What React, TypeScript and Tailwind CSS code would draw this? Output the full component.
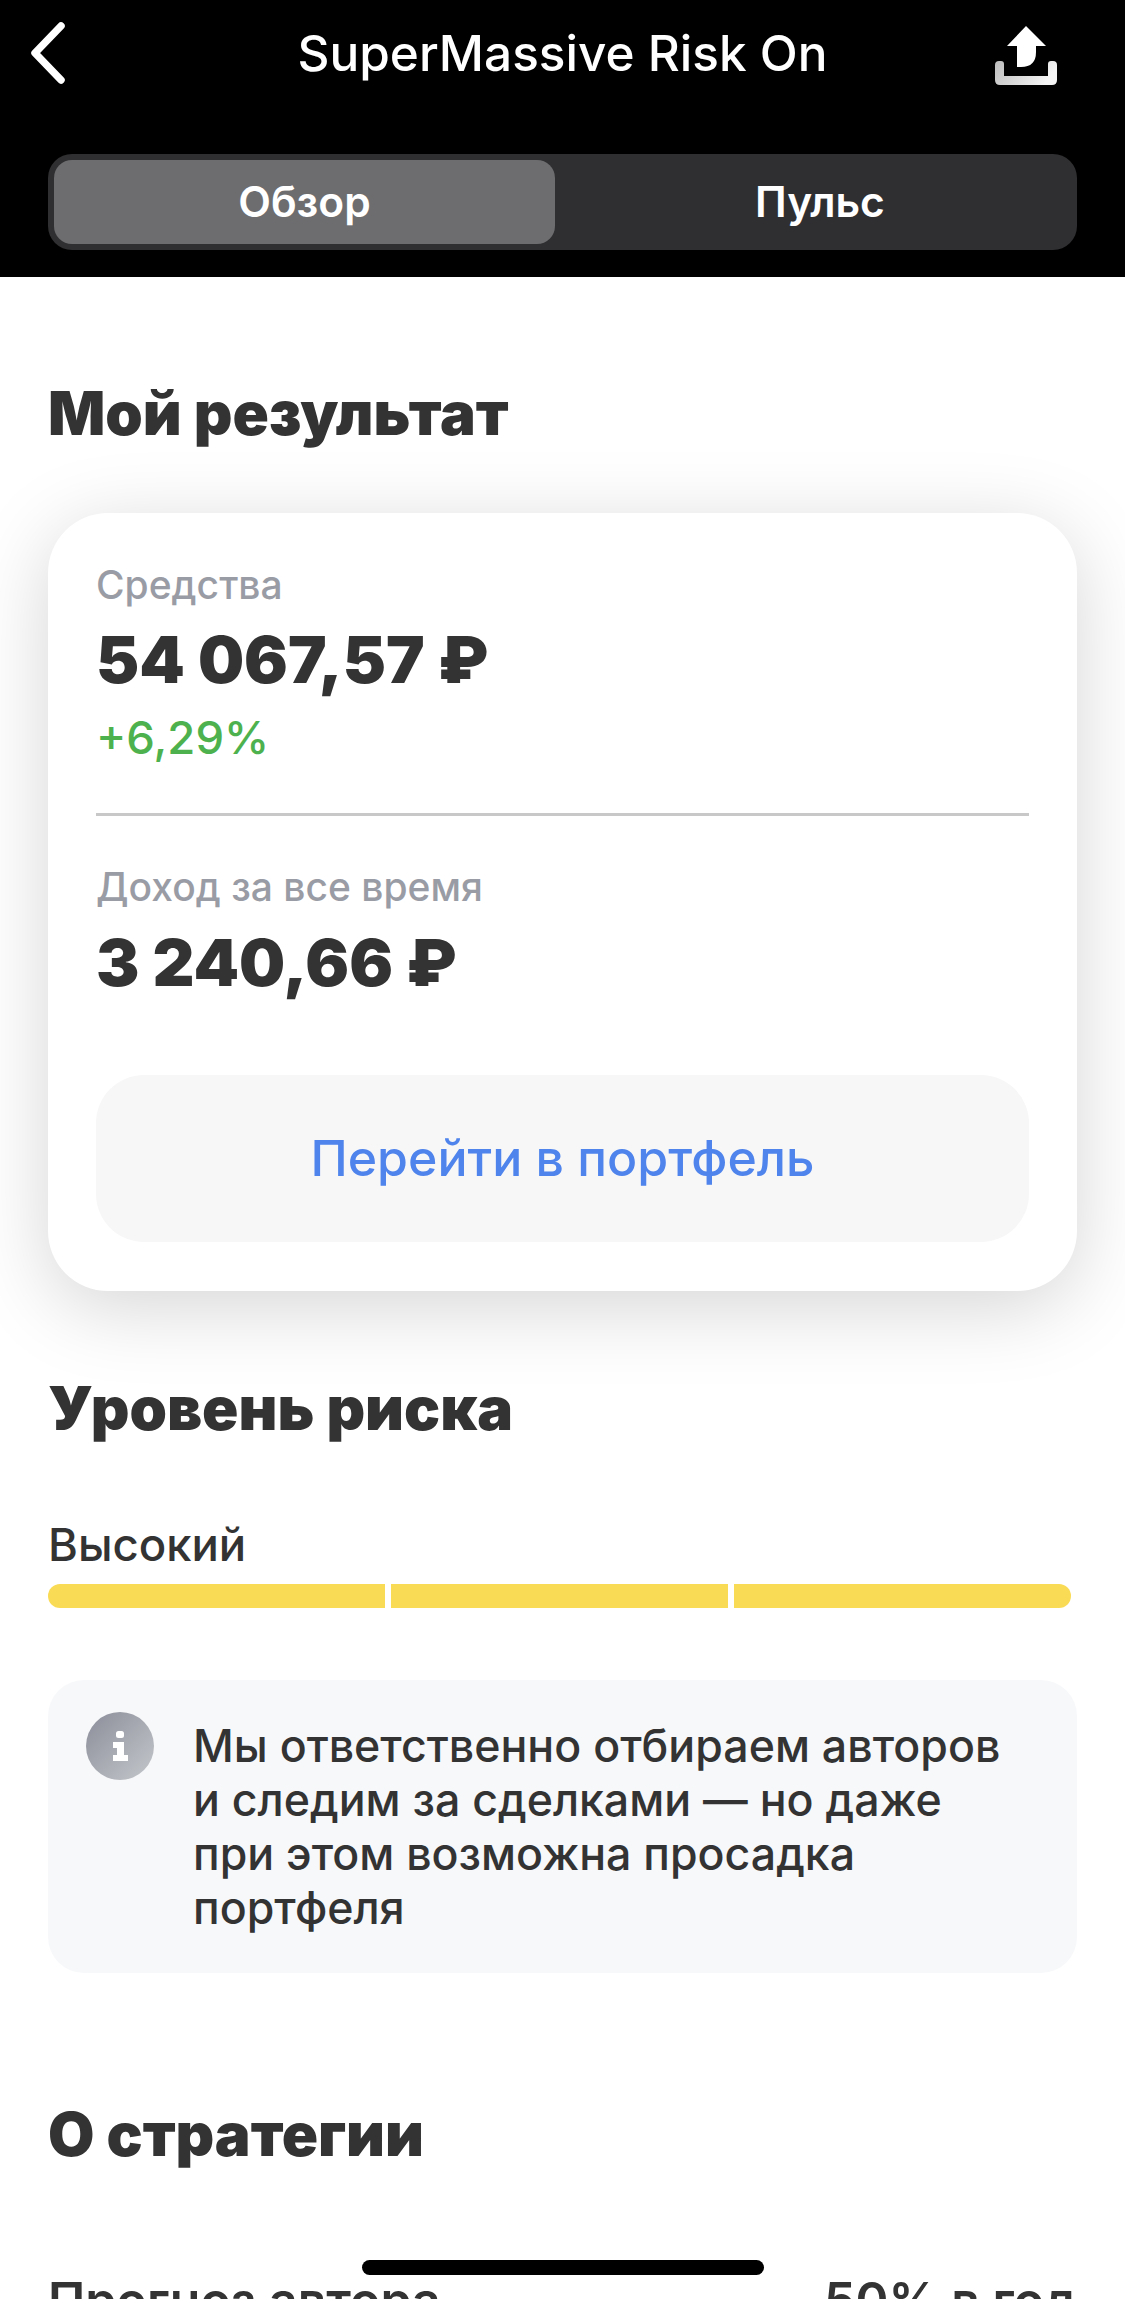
const font = { fontFamily: 'Inter, "Noto Sans", sans-serif' };

function BackIcon() {
  return (
    <svg width="40" height="64" viewBox="0 0 40 64" fill="none" className="ml-[28px]">
      <path d="M33 5 L7 32 L33 59" stroke="#fff" strokeWidth="7.5" strokeLinecap="round" strokeLinejoin="round" />
    </svg>
  );
}

function ShareIcon() {
  return (
    <svg width="62" height="59" viewBox="0 0 62 59" className="mt-[4px] mr-[68px] justify-self-end">
      <defs>
        <linearGradient id="tray" x1="0" y1="0" x2="1" y2="0.3">
          <stop offset="0" stopColor="#bdbdbd" />
          <stop offset="1" stopColor="#f4f4f4" />
        </linearGradient>
      </defs>
      <path d="M31 0 L51 20 L41 20 L41 26 Q41 41 26 41 L22 41 L22 20 L12 20 Z" fill="#fff" />
      <path
        d="M4 35 H6 Q9 35 9 38 V50 H53 V38 Q53 35 56 35 H58 Q62 35 62 39 V54 Q62 59 57 59 H5 Q0 59 0 54 V39 Q0 35 4 35 Z"
        fill="url(#tray)"
      />
    </svg>
  );
}

function InfoIcon() {
  return (
    <svg width="68" height="68" viewBox="0 0 68 68" className="shrink-0">
      <defs>
        <linearGradient id="info" x1="0" y1="0" x2="1" y2="1">
          <stop offset="0" stopColor="#8b8e99" />
          <stop offset="1" stopColor="#c4c7cb" />
        </linearGradient>
      </defs>
      <circle cx="34" cy="34" r="34" fill="url(#info)" />
      <rect x="30" y="19" width="8" height="7" rx="2.5" fill="#fff" />
      <path d="M27 30 H38 V43 H42 V49 H27 V43 H31 V36 H27 Z" fill="#fff" />
    </svg>
  );
}

export default function App() {
  return (
    <div className="relative h-[2299px] w-[1125px] overflow-hidden bg-white text-[#333]" style={font}>
      {/* Header */}
      <div className="h-[277px] bg-black">
        <div className="grid h-[106px] grid-cols-[1fr_auto_1fr] items-center">
          <BackIcon />
          <h1 className="text-[49.5px] leading-[56px] font-medium text-white">SuperMassive Risk On</h1>
          <ShareIcon />
        </div>
        <div className="mx-[48px] mt-[48px] flex h-[96px] rounded-[24px] bg-[#2f2f31] p-[6px]">
          <div className="flex w-[501px] items-center justify-center rounded-[18px] bg-[#6d6d6f] text-[42.5px] font-semibold text-white">
            Обзор
          </div>
          <div className="flex flex-1 items-center justify-center pl-[14px] text-[42.5px] font-semibold text-white">
            Пульс
          </div>
        </div>
      </div>

      <div className="px-[48px]">
        <h2 className="mt-[104px] mb-[68px] text-[60px] leading-[64px] font-black">Мой результат</h2>

        {/* Result card */}
        <div className="rounded-[60px] bg-white px-[48px] pt-[50px] pb-[49px] shadow-[0_16px_80px_rgba(0,0,0,0.17)]">
          <div className="text-[39px] leading-[44px] font-medium text-[#9a9ca5]">Средства</div>
          <div className="mt-[17px] text-[65px] leading-[72px] font-black">54 067,57 ₽</div>
          <div className="mt-[16px] text-[45.5px] leading-[52px] font-medium text-[#4db24d]">+6,29%</div>
          <div className="mt-[49px] h-[3px] bg-[#c8c8c8]" />
          <div className="mt-[49px] text-[39px] leading-[44px] font-medium text-[#9a9ca5]">Доход за все время</div>
          <div className="mt-[18px] text-[65px] leading-[72px] font-black">3 240,66 ₽</div>
          <div className="mt-[76px] flex h-[167px] items-center justify-center rounded-[48px] bg-[#f7f7f8] text-[50px] font-medium text-[#4f84ec]">
            Перейти в портфель
          </div>
        </div>

        {/* Risk */}
        <h2 className="mt-[85px] text-[60px] leading-[64px] font-black">Уровень риска</h2>
        <div className="mt-[79px] text-[45.5px] leading-[52px] font-medium">Высокий</div>
        <div className="mt-[13px] flex w-[1023px] gap-[6px]">
          <div className="h-[24px] flex-1 rounded-l-full bg-[#fadb55]" />
          <div className="h-[24px] flex-1 bg-[#fadb55]" />
          <div className="h-[24px] flex-1 rounded-r-full bg-[#fadb55]" />
        </div>

        <div className="mt-[72px] flex h-[293px] gap-[39px] rounded-[36px] bg-[#f7f8fa] pt-[32px] pl-[38px]">
          <InfoIcon />
          <p className="mt-[7px] text-[44.7px] leading-[54px] font-medium">
            Мы ответственно отбираем авторов
            <br />
            и следим за сделками — но даже
            <br />
            при этом возможна просадка
            <br />
            портфеля
          </p>
        </div>

        {/* About */}
        <h2 className="mt-[129px] text-[60px] leading-[64px] font-black">О стратегии</h2>
        <div className="mt-[106px] flex justify-between text-[50px] leading-[56px] font-semibold">
          <span>Прогноз автора</span>
          <span>50% в год</span>
        </div>
      </div>

      {/* Home indicator */}
      <div className="absolute top-[2260px] left-[362px] h-[15px] w-[402px] rounded-full bg-black" />
    </div>
  );
}
